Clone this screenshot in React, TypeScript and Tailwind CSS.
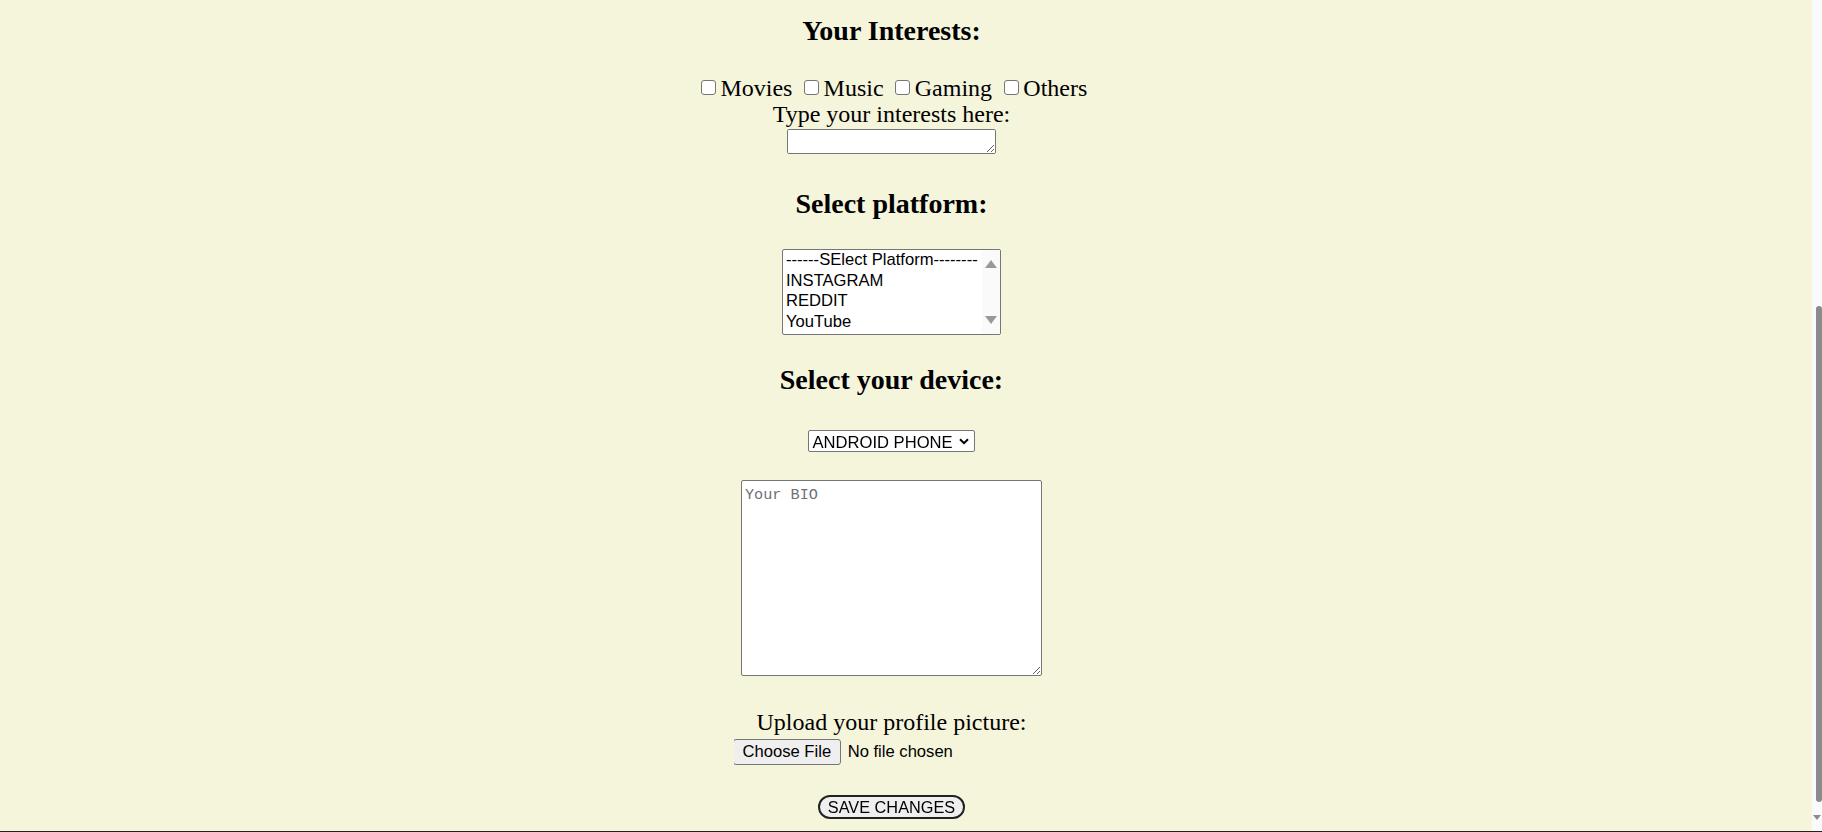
const serif = "font-['Liberation_Serif','Times_New_Roman',serif]";
const sans = "font-['Liberation_Sans',Arial,sans-serif]";

const interests = ["Movies", "Music", "Gaming", "Others"];
const platforms = ["------SElect Platform--------", "INSTAGRAM", "REDDIT", "YouTube"];

function Heading({ children, className }: { children: string; className: string }) {
  return (
    <h3 className={`${serif} text-[28px] leading-[32px] font-bold text-black ${className}`}>
      {children}
    </h3>
  );
}

function Triangle({ up }: { up?: boolean }) {
  return (
    <svg width="12" height="8" viewBox="0 0 12 8" className="block">
      <path d={up ? "M6 0 L12 8 L0 8 Z" : "M0 0 L12 0 L6 8 Z"} fill="#999999" />
    </svg>
  );
}

/** The scrolled list of platforms, drawn so the classic arrows show. */
function PlatformList() {
  return (
    <div
      role="listbox"
      className="mt-[29.45px] flex h-[86.4px] w-[218.4px] overflow-hidden rounded-[2px] border border-[#767676] bg-white"
    >
      <div className={`${sans} flex-1 pl-[2.7px] text-[16.6px] text-black`}>
        {platforms.map((p) => (
          <div key={p} role="option" className="h-[20.7px] whitespace-nowrap leading-[20.7px]">
            {p}
          </div>
        ))}
      </div>
      <div className="flex w-[18px] flex-col items-center justify-between bg-[#fafafa] pt-[10.5px] pb-[10.5px]">
        <Triangle up />
        <Triangle />
      </div>
    </div>
  );
}

export default function App() {
  return (
    <div className="flex h-[832px] w-full flex-col overflow-hidden bg-[#f5f5dc]">
      <div className="flex min-h-0 flex-1">
        <main className="flex flex-1 flex-col items-center pt-[14.5px] pr-[29px]">
          <Heading className="">Your Interests:</Heading>

          <div className={`${serif} mt-[28.3px] flex h-[26px] items-center pl-[5px] text-[24px] leading-[26px] text-black`}>
            {interests.map((name) => (
              <label key={name} className="ml-[11.5px] flex items-center first:ml-0">
                <input
                  type="checkbox"
                  className="h-[15px] w-[15px] appearance-none rounded-[3px] border border-[#767676] bg-white"
                />
                <span className="ml-[4.7px]">{name}</span>
              </label>
            ))}
          </div>
          <label className={`${serif} text-[24px] leading-[26px] text-black`}>Type your interests here:</label>
          <textarea className="mt-[2.25px] block h-[25px] w-[209.4px] rounded-[2px] border border-[#767676] bg-white" />

          <Heading className="mt-[33.5px]">Select platform:</Heading>
          <PlatformList />

          <Heading className="mt-[28.85px]">Select your device:</Heading>
          <div className="relative mt-[33.75px] h-[22px] w-[167.4px]">
            <select
              defaultValue="android"
              className={`${sans} block h-full w-full appearance-none rounded-[2px] border border-[#767676] bg-white pl-[3.7px] text-[16.6px] text-black`}
            >
              <option value="android">ANDROID PHONE</option>
              <option value="iphone">IPHONE</option>
              <option value="pc">PC</option>
            </select>
            <svg
              width="10"
              height="7"
              viewBox="0 0 10 7"
              className="pointer-events-none absolute top-[7.7px] right-[6px]"
            >
              <path d="M1 1.2 L5 5.2 L9 1.2" fill="none" stroke="#000" strokeWidth="2" />
            </svg>
          </div>

          <textarea
            placeholder="Your BIO"
            className="mt-[28px] block h-[196px] w-[300.4px] rounded-[2px] border border-[#767676] bg-white p-[2.7px] font-['Liberation_Mono','Courier_New',monospace] text-[15.2px] text-black placeholder:text-[#6f6f78]"
          />

          <label className={`${serif} mt-[33.3px] text-[24px] leading-[26px] text-black`}>
            Upload your profile picture:
          </label>
          <div className={`${sans} mt-[3.5px] flex w-[315px] items-center overflow-hidden text-[16.6px] text-black`}>
            <button
              type="button"
              className="-ml-[1px] h-[26.4px] w-[107.7px] rounded-[3px] border border-[#767676] bg-[#efefef]"
            >
              Choose File
            </button>
            <span className="ml-[7px]">No file chosen</span>
          </div>

          <button
            type="submit"
            className={`${sans} mt-[30.3px] h-[24px] w-[146.7px] rounded-full border-2 border-[#222] bg-[#efefef] text-[16.3px] leading-none text-black`}
          >
            SAVE CHANGES
          </button>
        </main>

        <div className="flex w-[10px] flex-col items-end bg-[#fafafa] pt-[306px]">
          <div className="mr-[0.5px] h-[496px] w-[6px] rounded-full bg-[#8b8b8b]" />
          <svg width="8" height="5" viewBox="0 0 8 5" className="mt-[13px] mr-[1px]">
            <path d="M0 0 L8 0 L4 5 Z" fill="#8b8b8b" />
          </svg>
        </div>
      </div>
      <div className="h-[1px] bg-[#222]" />
    </div>
  );
}
